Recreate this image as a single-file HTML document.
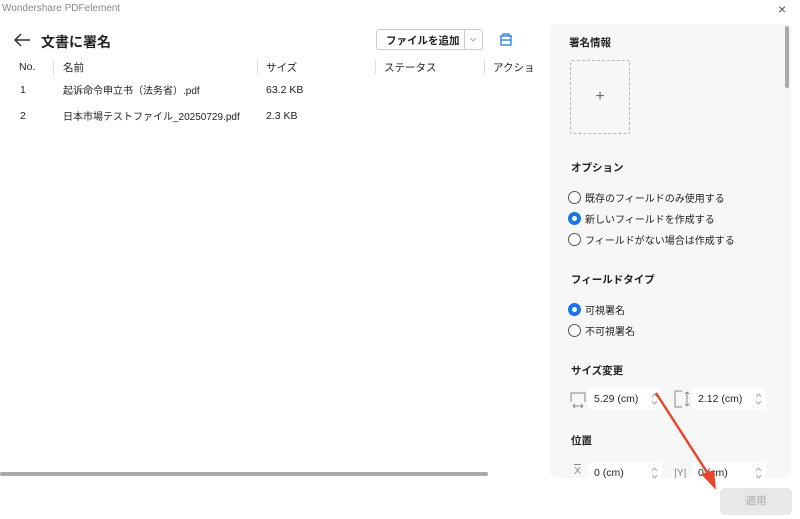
<!DOCTYPE html>
<html><head><meta charset="utf-8"><style>
*{margin:0;padding:0;box-sizing:border-box}
body{width:800px;height:519px;background:#fff;font-family:"Liberation Sans","Noto Sans CJK JP",sans-serif;color:#222;position:relative;overflow:hidden;font-size:10.5px}
.a{position:absolute;white-space:nowrap;line-height:14px}
.sep{position:absolute;width:1px;height:14px;background:#ddd;top:60px}
.panel{position:absolute;left:550px;top:24px;width:241px;height:454px;background:#f7f7f7;border-radius:8px}
.h{position:absolute;font-weight:bold;font-size:10.5px;line-height:14px}
.r{position:absolute;font-size:10px;line-height:14px;height:14px}
.r i{position:absolute;left:0;top:1px;width:13px;height:13px;border-radius:50%;border:1px solid #555;background:#fff}
.r i.on{border:4px solid #1a73e8}
.r span{position:absolute;left:17px;top:3px;white-space:nowrap}
.in{position:absolute;height:22px;background:#fff;border-radius:4px;font-size:10.5px;line-height:22px;padding-left:6px}
.sp{position:absolute;right:4px;top:5px}
</style></head><body>
<div class="a" style="left:2px;top:2px;color:#888;font-size:10px">Wondershare PDFelement</div>
<div class="a" style="left:778px;top:2px;color:#555;font-size:14px">×</div>
<svg class="a" style="left:13px;top:33px" width="18" height="14"><path d="M17 7H2M8 1L2 7l6 6" stroke="#333" stroke-width="1.5" fill="none"/></svg>
<div class="a" style="left:41px;top:33px;font-size:14px;font-weight:bold;line-height:18px">文書に署名</div>
<div class="a" style="left:376px;top:29px;width:107px;height:21px;border:1px solid #ccc;border-radius:3px;"></div>
<div class="a" style="left:386px;top:34px;font-weight:bold;font-size:10.5px">ファイルを追加</div>
<div class="a" style="left:464px;top:30px;width:1px;height:19px;background:#ccc"></div>
<svg class="a" style="left:470px;top:38px" width="6" height="4"><path d="M0 0l3 3 3-3" stroke="#aaa" fill="none"/></svg>
<svg class="a" style="left:499px;top:33px" width="14" height="13"><path d="M1 3h12M4 3V1h6v2M2 3v9h10V3M2 7h10" stroke="#1a73e8" stroke-width="1.2" fill="none"/></svg>
<div class="a" style="left:19px;top:60px">No.</div>
<div class="sep" style="left:53px"></div><div class="a" style="left:63px;top:61px">名前</div>
<div class="sep" style="left:257px"></div><div class="a" style="left:266px;top:61px">サイズ</div>
<div class="sep" style="left:375px"></div><div class="a" style="left:384px;top:61px">ステータス</div>
<div class="sep" style="left:484px"></div><div class="a" style="left:493px;top:61px">アクショ</div>
<div class="a" style="left:20px;top:83px">1</div><div class="a" style="left:63px;top:85px;font-size:10px">起诉命令申立书（法务省）.pdf</div><div class="a" style="left:266px;top:83px">63.2 KB</div>
<div class="a" style="left:20px;top:109px">2</div><div class="a" style="left:63px;top:111px;font-size:10px">日本市場テストファイル_20250729.pdf</div><div class="a" style="left:266px;top:109px">2.3 KB</div>
<div class="a" style="left:0;top:472px;width:488px;height:4px;background:#aaa;border-radius:2px"></div>
<div class="panel">
<div class="a" style="right:2px;top:2px;width:4px;height:62px;background:#aaa;border-radius:2px"></div>
<div class="h" style="left:19px;top:12px">署名情報</div>
<div class="a" style="left:20px;top:36px;width:60px;height:74px;border:1px dashed #bbb;border-radius:2px;text-align:center;line-height:72px;color:#667;font-size:16px">+</div>
<div class="h" style="left:21px;top:137px">オプション</div>
<div class="r" style="left:18px;top:166px"><i></i><span>既存のフィールドのみ使用する</span></div>
<div class="r" style="left:18px;top:187px"><i class="on"></i><span>新しいフィールドを作成する</span></div>
<div class="r" style="left:18px;top:208px"><i></i><span>フィールドがない場合は作成する</span></div>
<div class="h" style="left:21px;top:249px">フィールドタイプ</div>
<div class="r" style="left:18px;top:278px"><i class="on"></i><span>可視署名</span></div>
<div class="r" style="left:18px;top:299px"><i></i><span>不可視署名</span></div>
<div class="h" style="left:21px;top:340px">サイズ変更</div>
<svg class="a" style="left:20px;top:368px" width="16" height="16"><path d="M1 10V1h14v9M3 14h10M3 14l2-2M3 14l2 2M13 14l-2-2M13 14l-2 2" stroke="#888" fill="none"/></svg>
<div class="in" style="left:38px;top:364px;width:74px">5.29 (cm)<svg class="sp" width="7" height="12"><path d="M1 4l2.5-3 2.5 3M1 8l2.5 3 2.5-3" stroke="#aaa" fill="none"/></svg></div>
<svg class="a" style="left:124px;top:366px" width="16" height="18"><path d="M8 1H1v16h7M13 2v14M13 2l-2 2M13 2l2 2M13 16l-2-2M13 16l2-2" stroke="#888" fill="none"/></svg>
<div class="in" style="left:142px;top:364px;width:74px">2.12 (cm)<svg class="sp" width="7" height="12"><path d="M1 4l2.5-3 2.5 3M1 8l2.5 3 2.5-3" stroke="#aaa" fill="none"/></svg></div>
<div class="h" style="left:21px;top:410px">位置</div>
<div class="a" style="left:24px;top:440px;color:#888;font-size:10.5px;border-top:1px solid #888;line-height:12px">X</div>
<div class="in" style="left:38px;top:438px;width:74px">0 (cm)<svg class="sp" width="7" height="12"><path d="M1 4l2.5-3 2.5 3M1 8l2.5 3 2.5-3" stroke="#aaa" fill="none"/></svg></div>
<div class="a" style="left:124px;top:442px;color:#888">|Y|</div>
<div class="in" style="left:142px;top:438px;width:74px">0 (cm)<svg class="sp" width="7" height="12"><path d="M1 4l2.5-3 2.5 3M1 8l2.5 3 2.5-3" stroke="#aaa" fill="none"/></svg></div>
</div>
<div class="a" style="left:720px;top:488px;width:72px;height:27px;background:#e8e8e8;border-radius:5px;color:#bbb;text-align:center;line-height:27px;font-weight:bold">適用</div>
<svg class="a" style="left:0;top:0" width="800" height="519"><path d="M656 393L712 480" stroke="#e8452c" stroke-width="2.5"/><path d="M716 490L701 474L714 470Z" fill="#e8452c"/></svg>
</body></html>
